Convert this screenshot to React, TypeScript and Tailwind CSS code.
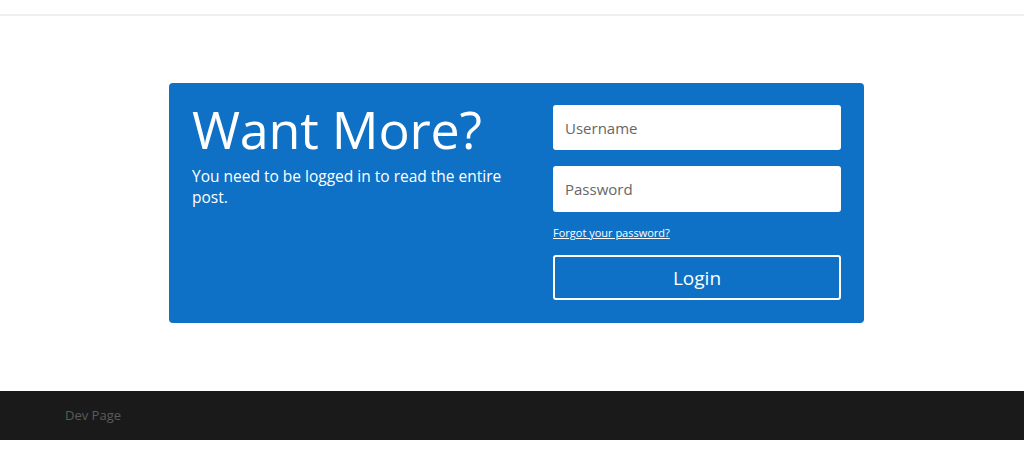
export default function App() {
  return (
    <div className="min-h-[463px] bg-white" style={{ fontFamily: '"Open Sans", "Liberation Sans", sans-serif' }}>
      <header className="h-[16px] border-b-2 border-[#efefef]"></header>
      <main className="pt-[67px] pb-[68px]">
        <div className="ml-[169px] w-[695px] h-[240px] rounded-[4px] bg-[#0e71c5] px-[23px] pt-[22px] flex gap-[30px]">
          <div className="flex-1 text-white">
            <h1 className="text-[52px] leading-[52px] -mt-[2px] tracking-[-0.2px]">Want More?</h1>
            <p className="text-[15.5px] leading-[21px] mt-[11px]">
              You need to be logged in to read the entire post.
            </p>
          </div>
          <form className="w-[288px]">
            <input
              type="text"
              placeholder="Username"
              className="block w-full h-[45px] rounded-[3px] bg-white px-3 text-[15px] text-[#555] placeholder:text-[#666] outline-none"
            />
            <input
              type="password"
              placeholder="Password"
              className="block w-full h-[46px] mt-[16px] rounded-[3px] bg-white px-3 text-[15px] text-[#555] placeholder:text-[#666] outline-none"
            />
            <div className="mt-[13px] h-[16px] text-[11px] leading-[16px]">
              <a href="#" className="text-white underline">Forgot your password?</a>
            </div>
            <button
              type="button"
              className="block w-full h-[45px] mt-[14px] pt-[1px] rounded-[3px] border-2 border-white text-white text-[19px]"
            >
              Login
            </button>
          </form>
        </div>
      </main>
      <footer className="h-[49px] bg-[#1a1a1a] flex items-center pl-[65px]">
        <span className="text-[13px] text-[#5a5a5a]">Dev Page</span>
      </footer>
    </div>
  );
}
